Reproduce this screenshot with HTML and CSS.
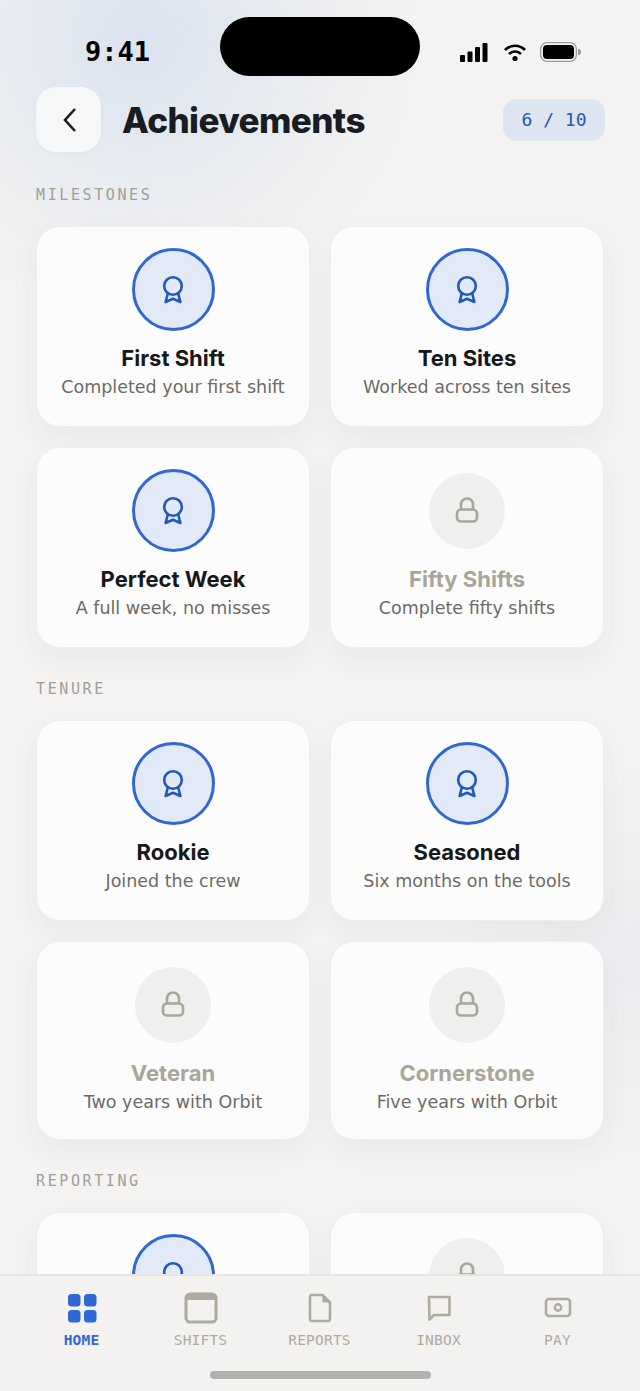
FILE: index.html
```html
<!DOCTYPE html>
<html lang="en">
<head>
    <meta charset="UTF-8">
    <meta name="viewport" content="width=device-width, initial-scale=1.0">
    <title>Achievements</title>
    <link rel="stylesheet" href="styles.css">
</head>
<body>
    <svg class="sprites" width="0" height="0">
        <symbol id="medal" viewBox="0 0 28 32">
            <circle cx="14" cy="12" r="8.8" fill="none" stroke="currentColor" stroke-width="2.6"/>
            <path d="M8.8 19.5 L6.6 28 L14 24.8 L21.4 28 L19.2 19.5" fill="none" stroke="currentColor" stroke-width="2.6" stroke-linejoin="round" stroke-linecap="round"/>
        </symbol>
        <symbol id="lock" viewBox="0 0 28 32">
            <rect x="4" y="14.5" width="20" height="12" rx="4" fill="none" stroke="currentColor" stroke-width="2.6"/>
            <path d="M8 14.5 V9.5 a6 6 0 0 1 12 0 V14.5" fill="none" stroke="currentColor" stroke-width="2.6"/>
        </symbol>
    </svg>

    <div class="phone">
        <div class="island"></div>

        <div class="status-bar">
            <span class="clock">9:41</span>
            <div class="status-icons">
                <svg class="signal" width="30" height="20" viewBox="0 0 30 20">
                    <rect x="1" y="13" width="5" height="7" rx="1"/>
                    <rect x="8.5" y="9.5" width="5" height="10.5" rx="1"/>
                    <rect x="16" y="5" width="5" height="15" rx="1"/>
                    <rect x="23.5" y="1" width="5" height="19" rx="1"/>
                </svg>
                <svg width="24" height="20" viewBox="0 0 24 20">
                    <path d="M2 8 a14 14 0 0 1 20 0" fill="none" stroke="#000" stroke-width="2.6"/>
                    <path d="M6 12 a8.5 8.5 0 0 1 12 0" fill="none" stroke="#000" stroke-width="2.6"/>
                    <circle cx="12" cy="16.5" r="2.6"/>
                </svg>
                <svg width="42" height="20" viewBox="0 0 42 20">
                    <rect x="0.7" y="0.7" width="35.6" height="18.6" rx="6" fill="none" stroke="#9b9b9b" stroke-width="1.3"/>
                    <rect x="3" y="3" width="31" height="14" rx="4"/>
                    <path d="M38 7 a3 3 0 0 1 0 6 Z" fill="#9b9b9b"/>
                </svg>
            </div>
        </div>

        <header class="top-bar">
            <button class="back-btn">
                <svg width="18" height="28" viewBox="0 0 18 28"><path d="M15 3 L5 14 L15 25" fill="none" stroke="#1a1d22" stroke-width="2.6"/></svg>
            </button>
            <h1 class="page-title">Achievements</h1>
            <span class="count-badge">6 / 10</span>
        </header>

        <main class="scroll-area">
            <section class="group">
                <h2 class="group-label">MILESTONES</h2>
                <div class="card-grid">
                    <div class="card earned">
                        <div class="badge"><svg><use href="#medal"/></svg></div>
                        <div class="card-title">First Shift</div>
                        <div class="card-sub">Completed your first shift</div>
                    </div>
                    <div class="card earned">
                        <div class="badge"><svg><use href="#medal"/></svg></div>
                        <div class="card-title">Ten Sites</div>
                        <div class="card-sub">Worked across ten sites</div>
                    </div>
                    <div class="card earned">
                        <div class="badge"><svg><use href="#medal"/></svg></div>
                        <div class="card-title">Perfect Week</div>
                        <div class="card-sub">A full week, no misses</div>
                    </div>
                    <div class="card locked">
                        <div class="badge"><svg><use href="#lock"/></svg></div>
                        <div class="card-title">Fifty Shifts</div>
                        <div class="card-sub">Complete fifty shifts</div>
                    </div>
                </div>
            </section>

            <section class="group">
                <h2 class="group-label">TENURE</h2>
                <div class="card-grid">
                    <div class="card earned">
                        <div class="badge"><svg><use href="#medal"/></svg></div>
                        <div class="card-title">Rookie</div>
                        <div class="card-sub">Joined the crew</div>
                    </div>
                    <div class="card earned">
                        <div class="badge"><svg><use href="#medal"/></svg></div>
                        <div class="card-title">Seasoned</div>
                        <div class="card-sub">Six months on the tools</div>
                    </div>
                    <div class="card locked">
                        <div class="badge"><svg><use href="#lock"/></svg></div>
                        <div class="card-title">Veteran</div>
                        <div class="card-sub">Two years with Orbit</div>
                    </div>
                    <div class="card locked">
                        <div class="badge"><svg><use href="#lock"/></svg></div>
                        <div class="card-title">Cornerstone</div>
                        <div class="card-sub">Five years with Orbit</div>
                    </div>
                </div>
            </section>

            <section class="group">
                <h2 class="group-label">REPORTING</h2>
                <div class="card-grid">
                    <div class="card earned">
                        <div class="badge"><svg><use href="#medal"/></svg></div>
                    </div>
                    <div class="card locked">
                        <div class="badge"><svg><use href="#lock"/></svg></div>
                    </div>
                </div>
            </section>
        </main>

        <nav class="tab-bar">
            <div class="tabs">
                <div class="tab active">
                    <svg width="30" height="30" viewBox="0 0 30 30">
                        <rect x="1" y="1" width="12.5" height="12.5" rx="3.5"/>
                        <rect x="17" y="1" width="12.5" height="12.5" rx="3.5"/>
                        <rect x="1" y="17" width="12.5" height="12.5" rx="3.5"/>
                        <rect x="17" y="17" width="12.5" height="12.5" rx="3.5"/>
                    </svg>
                    <span>HOME</span>
                </div>
                <div class="tab">
                    <svg width="34" height="32" viewBox="0 0 34 32">
                        <rect x="2" y="2" width="30" height="28" rx="4" fill="none" stroke="currentColor" stroke-width="3"/>
                        <rect x="2" y="2" width="30" height="6" rx="2"/>
                    </svg>
                    <span>SHIFTS</span>
                </div>
                <div class="tab">
                    <svg width="24" height="30" viewBox="0 0 24 30">
                        <path d="M4 2 H14.5 L22 9.5 V26 a2 2 0 0 1 -2 2 H4 a2 2 0 0 1 -2 -2 V4 a2 2 0 0 1 2 -2 Z" fill="none" stroke="currentColor" stroke-width="2.6" stroke-linejoin="round"/>
                        <path d="M14.5 2 V9.5 H22 Z"/>
                    </svg>
                    <span>REPORTS</span>
                </div>
                <div class="tab">
                    <svg width="26" height="30" viewBox="0 0 26 30">
                        <path d="M3 4 H23.5 V22 H8 L3.5 26.5 Z" fill="none" stroke="currentColor" stroke-width="2.6" stroke-linejoin="round"/>
                    </svg>
                    <span>INBOX</span>
                </div>
                <div class="tab">
                    <svg width="28" height="30" viewBox="0 0 28 30">
                        <rect x="2" y="6" width="24" height="17" rx="3" fill="none" stroke="currentColor" stroke-width="2.6"/>
                        <circle cx="14" cy="14.5" r="3.2" fill="none" stroke="currentColor" stroke-width="2.4"/>
                    </svg>
                    <span>PAY</span>
                </div>
            </div>
            <div class="home-indicator"></div>
        </nav>
    </div>
</body>
</html>
```

FILE: styles.css
```css
body {
    margin: 0;
    font-family: 'DejaVu Sans', sans-serif;
    color: #16181c;
}

.sprites {
    display: block;
    height: 0;
}

.phone {
    position: relative;
    width: 640px;
    height: 1391px;
    overflow: hidden;
    display: flex;
    flex-direction: column;
    background:
        radial-gradient(circle 280px at 140px 40px, #dbe3ef 0%, rgba(219, 227, 239, 0) 100%),
        radial-gradient(circle 200px at 640px 960px, #e9ebef 0%, rgba(233, 235, 239, 0) 100%),
        #f4f3f1;
}

.island {
    position: absolute;
    top: 17px;
    left: 220px;
    width: 200px;
    height: 59px;
    background-color: #000;
    border-radius: 30px;
}

.status-bar {
    flex: none;
    height: 87px;
    box-sizing: border-box;
    padding: 33px 58px 0 85px;
    display: flex;
    justify-content: space-between;
}

.clock {
    font-family: 'DejaVu Sans Mono', monospace;
    font-size: 27px;
    font-weight: bold;
    line-height: 38px;
    color: #000;
}

.status-icons {
    display: flex;
    align-items: center;
    gap: 13px;
    height: 38px;
}

.signal {
    margin-right: 1px;
}

.top-bar {
    flex: none;
    display: flex;
    align-items: center;
    padding: 0 35px 0 36px;
}

.back-btn {
    width: 65px;
    height: 65px;
    padding: 0;
    border: none;
    border-radius: 20px;
    background-color: #f6f7f9;
    box-shadow: 0 1px 4px rgba(0, 0, 0, 0.03);
    display: flex;
    align-items: center;
    justify-content: center;
}

.page-title {
    margin: 0 0 0 21px;
    flex: 1;
    font-family: Inter, sans-serif;
    font-size: 35px;
    font-weight: 800;
    letter-spacing: -0.6px;
    color: #191c22;
}

.count-badge {
    width: 102px;
    height: 42px;
    border-radius: 14px;
    background-color: #dde5f1;
    color: #2458b8;
    font-family: 'DejaVu Sans Mono', monospace;
    font-size: 18px;
    line-height: 42px;
    text-align: center;
}

.scroll-area {
    flex: 1;
    min-height: 0;
    overflow: hidden;
    padding: 34px 36px 0;
}

.group {
    margin-bottom: 32px;
}

.group-label {
    margin: 0 0 22px;
    padding-top: 1px;
    font-family: 'DejaVu Sans Mono', monospace;
    font-size: 15px;
    font-weight: normal;
    line-height: 17px;
    letter-spacing: 2.6px;
    color: #a09e95;
}

.card-grid {
    display: grid;
    grid-template-columns: 1fr 1fr;
    gap: 20px;
}

.card {
    box-sizing: border-box;
    background-color: #fcfcfc;
    border: 1px solid #efeeec;
    border-radius: 24px;
    box-shadow: 0 12px 28px rgba(60, 60, 50, 0.05);
    display: flex;
    flex-direction: column;
    align-items: center;
    text-align: center;
}

.earned {
    padding: 21px 8px 25px;
}

.locked {
    padding: 25px 8px 23px;
}

.badge {
    border-radius: 50%;
    box-sizing: border-box;
    display: flex;
    align-items: center;
    justify-content: center;
}

.badge svg {
    width: 28px;
    height: 32px;
}

.earned .badge {
    width: 83px;
    height: 83px;
    margin-bottom: 13px;
    background-color: #e3eaf7;
    border: 3px solid #2f68d4;
    color: #2258b8;
}

.locked .badge {
    width: 76px;
    height: 76px;
    margin-bottom: 16px;
    background-color: #efefee;
    color: #a8a599;
}

.card-title {
    font-family: Inter, sans-serif;
    font-size: 22px;
    font-weight: 700;
    line-height: 29px;
    color: #17181b;
}

.locked .card-title {
    color: #a8a599;
}

.card-sub {
    font-size: 17.5px;
    line-height: 28px;
    color: #6c6b66;
}

.tab-bar {
    flex: none;
    height: 117px;
    box-sizing: border-box;
    background-color: #f3f2f0;
    border-top: 2px solid #e6e5e3;
    display: flex;
    flex-direction: column;
    align-items: center;
}

.tabs {
    align-self: stretch;
    display: grid;
    grid-template-columns: repeat(5, 119px);
    padding: 16px 0 0 22px;
}

.tab {
    display: flex;
    flex-direction: column;
    align-items: center;
    color: #aeaa9e;
    fill: #aeaa9e;
}

.tab svg {
    height: 32px;
}

.tab span {
    margin-top: 7px;
    font-family: 'DejaVu Sans Mono', monospace;
    font-size: 14.5px;
    line-height: 18px;
    letter-spacing: 0.2px;
}

.tab.active {
    color: #2f68d4;
    fill: #2f68d4;
}

.tab.active span {
    font-weight: bold;
}

.home-indicator {
    margin-top: 22px;
    width: 221px;
    height: 8px;
    border-radius: 4px;
    background-color: #b3b1ae;
}
```
